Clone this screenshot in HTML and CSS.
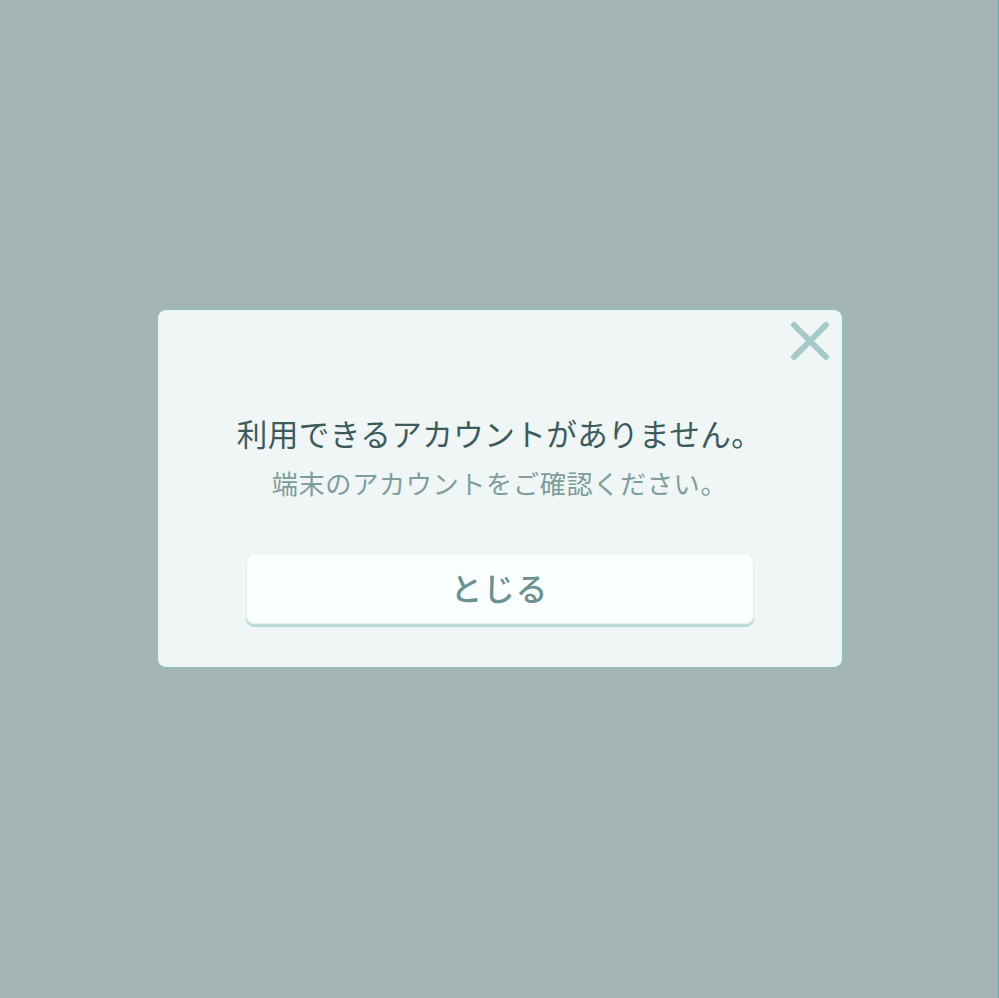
FILE: index.html
```html
<!DOCTYPE html>
<html lang="ja">
<head>
<meta charset="utf-8">
<link rel="stylesheet" href="styles.css">
</head>
<body>
<div class="screen">
  <div class="modal">
    <button class="close" aria-label="close">
      <svg width="44" height="44" viewBox="0 0 44 44"><path d="M6 6 L38 38 M38 6 L6 38" stroke="#a6caca" stroke-width="6" stroke-linecap="round" fill="none"/></svg>
    </button>
    <p class="title">利用できるアカウントがありません。</p>
    <p class="sub">端末のアカウントをご確認ください。</p>
    <button class="btn">とじる</button>
  </div>
</div>
</body>
</html>
```
FILE: styles.css
```css
html, body {
  margin: 0;
  padding: 0;
  height: 100%;
}
body {
  font-family: "Noto Sans CJK JP", "Noto Sans", sans-serif;
  background: #a3b5b5;
}
.screen {
  box-sizing: border-box;
  height: 998px;
  width: 999px;
  border-right: 1px solid #6fa2b0;
  display: flex;
  justify-content: center;
  padding-top: 309px;
}
.modal {
  position: relative;
  box-sizing: border-box;
  width: 686px;
  height: 359px;
  margin-left: 1px;
  background: #eff6f5;
  border: 1px solid #86c0bc;
  border-radius: 9px;
  padding: 102px 87px 0 87px;
  display: flex;
  flex-direction: column;
  align-items: center;
}
.close {
  position: absolute;
  top: 9px;
  right: 10px;
  width: 44px;
  height: 44px;
  padding: 0;
  border: 0;
  background: none;
  display: block;
}
.close svg { display: block; }
.title {
  margin: 0;
  font-size: 30.6px;
  line-height: 42px;
  color: #3d5b5b;
  letter-spacing: 0.4px;
  white-space: nowrap;
}
.sub {
  margin: 11px 0 0 0;
  font-size: 26.2px;
  line-height: 36px;
  color: #7e9d9d;
  letter-spacing: 0.6px;
  white-space: nowrap;
}
.btn {
  margin-top: 52px;
  width: 508px;
  height: 71px;
  box-sizing: border-box;
  border: 1px solid #e2efee;
  border-radius: 8px;
  background: #f9fffe;
  box-shadow: 0 3px 0 #bfdada;
  font-family: inherit;
  font-size: 31.5px;
  font-weight: 500;
  color: #6d9090;
  padding: 0 0 4px 0;
  letter-spacing: 1px;
}
```
